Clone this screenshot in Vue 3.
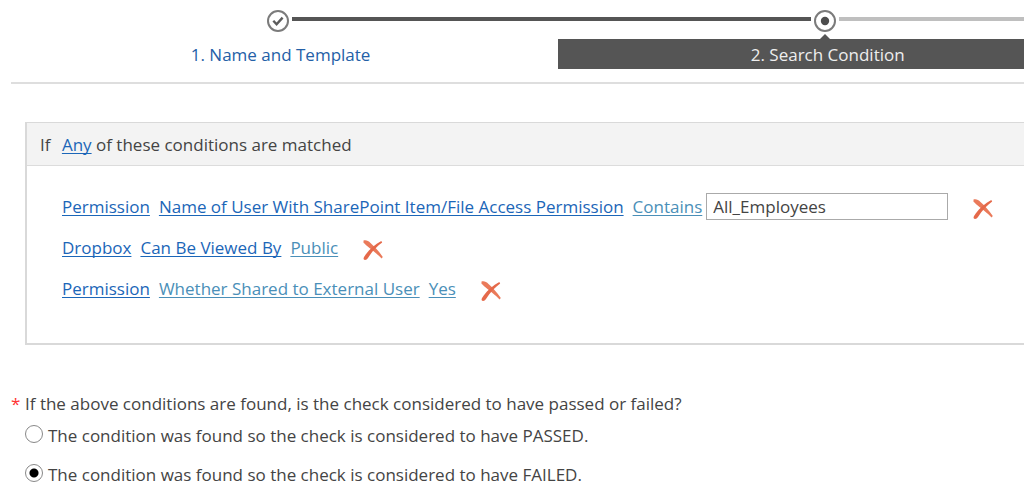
<template>
  <main class="wizard">
    <nav class="steps-nav" aria-label="Steps">
      <ol class="steps">
        <li v-for="(step, i) in steps" :key="i" class="step" :class="step.state">
          <div class="track">
            <span class="line before"></span>
            <svg class="marker" width="22" height="22" viewBox="0 0 22 22" aria-hidden="true">
              <circle cx="11" cy="11" r="10" fill="#fff" stroke="#7b7b7b" stroke-width="2" />
              <path
                v-if="step.state === 'done'"
                d="M6.3 10.8 9.6 14.3 15.6 7.6"
                fill="none"
                stroke="#5c5c5c"
                stroke-width="2.4"
              />
              <circle v-else-if="step.state === 'current'" cx="11" cy="11" r="4.2" fill="#4d4d4d" />
            </svg>
            <span class="line after"></span>
          </div>
          <a href="#" class="step-label" @click.prevent>{{ step.label }}</a>
        </li>
      </ol>
    </nav>

    <section class="conditions">
      <header class="conditions-header">
        If <a href="#" class="link match" @click.prevent>Any</a> of these conditions are matched
      </header>
      <ul class="rows">
        <li v-for="(row, i) in rows" :key="row.id" class="row">
          <a
            v-for="part in row.parts"
            :key="part.text"
            href="#"
            class="link"
            :class="{ light: part.light }"
            @click.prevent
          >{{ part.text }}</a>
          <input v-if="row.hasValue" v-model="row.value" class="value" type="text" aria-label="Value" />
          <button class="remove" type="button" aria-label="Remove condition" @click="rows.splice(i, 1)">
            <svg width="20" height="20" viewBox="0 0 20 20">
              <path d="M.5 .6C3-.2 5.500 1 7.500 3C12 7 16 11.500 19.800 17L18.600 18.400C14 14 10.500 11 6.500 8C4 6 2 4 .5 2.700Z" fill="#ea7a5a" />
              <path d="M18.300 1L19.200 2.600C14.500 6 9 11.500 5 18C3.800 20 1.500 20.400 .7 19.200C.2 18 1.300 16.300 2.700 14.400C6.700 9.300 12 4.300 18.300 1Z" fill="#e5694a" />
            </svg>
          </button>
        </li>
      </ul>
    </section>

    <fieldset class="result">
      <legend><span class="required">*</span>If the above conditions are found, is the check considered to have passed or failed?</legend>
      <label v-for="option in options" :key="option" class="option">
        <input v-model="result" type="radio" name="result" :value="option" />
        <span>The condition was found so the check is considered to have {{ option }}.</span>
      </label>
    </fieldset>
  </main>
</template>

<script setup>
import { ref } from 'vue';

const steps = [
  { label: '1. Name and Template', state: 'done' },
  { label: '2. Search Condition', state: 'current' },
];

const rows = ref([
  {
    id: 1,
    parts: [
      { text: 'Permission' },
      { text: 'Name of User With SharePoint Item/File Access Permission' },
      { text: 'Contains', light: true },
    ],
    hasValue: true,
    value: 'All_Employees',
  },
  {
    id: 2,
    parts: [{ text: 'Dropbox' }, { text: 'Can Be Viewed By' }, { text: 'Public', light: true }],
  },
  {
    id: 3,
    parts: [
      { text: 'Permission' },
      { text: 'Whether Shared to External User', light: true },
      { text: 'Yes', light: true },
    ],
  },
]);

const options = ['PASSED', 'FAILED'];
const result = ref('FAILED');
</script>

<style>
body {
  margin: 0;
  background: #fff;
}
</style>

<style scoped>
.wizard {
  font-family: 'Open Sans', 'Noto Sans', sans-serif;
  font-size: 17px;
  line-height: 24px;
  color: #444;
  overflow: hidden;
}
.steps-nav {
  margin-left: 11px;
  padding: 10px 0 13px;
  border-bottom: 2px solid #dedede;
  overflow: hidden;
}
.steps {
  display: grid;
  grid-template-columns: repeat(2, 53.8%);
  margin: 0 0 0 -4px;
  padding: 0;
  list-style: none;
}
.track {
  display: flex;
  align-items: flex-start;
  gap: 3px;
  margin: 0 3px 0 -3px;
}
.marker {
  flex: none;
  overflow: visible;
}
.line {
  flex: 1;
  height: 4px;
  margin-top: 7px;
  background: #555;
}
.done .before {
  visibility: hidden;
}
.current .after {
  background: #bfbfbf;
}
.step-label {
  position: relative;
  display: block;
  margin: 7px 4px 0;
  padding: 4px 0 2px;
  text-align: center;
  text-decoration: none;
  color: #2460a7;
}
.current .step-label {
  background: #555;
  color: #eee;
}
.current .step-label::before {
  content: '';
  position: absolute;
  top: -5px;
  left: calc(50% - 8px);
  border: 5px solid transparent;
  border-top: 0;
  border-bottom-color: #555;
}
.conditions {
  margin: 38px 0 0 25px;
  border: 2px solid #d9d9d9;
  border-top-width: 1px;
  border-right: 0;
}
.conditions-header {
  padding: 10px 13px 8px;
  background: #f3f3f3;
  border-bottom: 1px solid #dcdcdc;
}
.link {
  color: #1b66b8;
  text-decoration: underline;
  text-underline-offset: 2px;
  text-decoration-skip-ink: none;
}
.light {
  color: #4a8fb8;
}
.match {
  margin-left: 7px;
}
.rows {
  margin: 0;
  padding: 20px 0 34px 35px;
  list-style: none;
}
.row {
  display: flex;
  align-items: center;
  gap: 9px;
  height: 41px;
  white-space: nowrap;
}
.value {
  box-sizing: border-box;
  width: 242px;
  height: 27px;
  margin-left: -5px;
  padding: 0 6px;
  border: 1px solid #aaa;
  font: inherit;
  color: #444;
}
.remove {
  display: flex;
  margin: 4px 0 0 16px;
  padding: 0;
  border: 0;
  background: none;
  cursor: pointer;
}
.result {
  margin: 47px 0 0;
  padding: 0 0 0 25px;
  border: 0;
}
.result legend {
  margin-left: -14px;
  padding: 0;
}
.required {
  display: inline-block;
  width: 14px;
  color: #f33;
}
.option {
  display: flex;
  align-items: center;
  gap: 5px;
  margin: 8px 0 15px;
}
.option input {
  appearance: none;
  flex: none;
  box-sizing: border-box;
  width: 18px;
  height: 18px;
  margin: 0 0 4px;
  border: 1px solid #888;
  border-radius: 50%;
  background: #fff;
}
.option input:checked {
  background: radial-gradient(circle, #000 4px, #fff 5px);
}
</style>
